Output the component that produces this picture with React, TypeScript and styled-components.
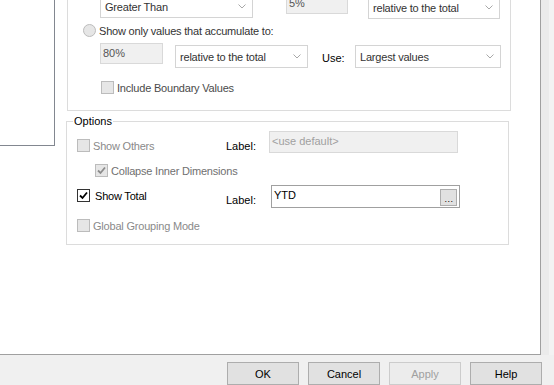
import React from 'react';
import styled, { createGlobalStyle } from 'styled-components';

const GlobalStyle = createGlobalStyle`
  *, *::before, *::after { box-sizing: border-box; }
  html, body { margin: 0; padding: 0; }
  body {
    width: 554px;
    height: 385px;
    overflow: hidden;
    background: #f0f0f0;
    font-family: "Liberation Sans", Arial, sans-serif;
    font-size: 11px;
    color: #000;
  }
`;

const Window = styled.div`
  width: 554px;
  height: 385px;
  display: flex;
  flex-direction: column;
  overflow: hidden;
  background: #f0f0f0;
`;

const Body = styled.div`
  display: flex;
  height: 355px;
  flex-shrink: 0;
`;

const Page = styled.div`
  width: 541px;
  height: 355px;
  background: #fff;
  border-right: 1px solid #a0a0a0;
  border-bottom: 1px solid #a0a0a0;
  display: flex;
  overflow: hidden;
`;

const ScrollTrack = styled.div`
  flex: 1;
  background: linear-gradient(to right, #ebebeb 0 8px, #f3f3f3 8px);
`;

const TreePane = styled.div`
  width: 55px;
  height: 146px;
  flex-shrink: 0;
  background: #fff;
  border-right: 1px solid #828790;
  border-bottom: 1px solid #828790;
`;

const Content = styled.div`
  display: flex;
  flex-direction: column;
  padding-left: 12px;
`;

const GroupBox = styled.div`
  margin-top: -20px;
  width: 444px;
  border: 1px solid #dcdcdc;
  padding: 12px 0 14px;
  display: flex;
  flex-direction: column;
`;

const OptionsBox = styled.fieldset`
  margin: 3px 0 0 -1px;
  width: 443px;
  min-inline-size: 0;
  border: 1px solid #dcdcdc;
  padding: 2px 0 11px;
  display: flex;
  flex-direction: column;
`;

const Legend = styled.legend`
  margin-left: 6px;
  padding: 0 1px;
  height: 15px;
  line-height: 15px;
  color: #000;
`;

const Row = styled.div<{ $h: number; $mt?: number }>`
  display: flex;
  align-items: flex-start;
  height: ${p => p.$h}px;
  margin-top: ${p => p.$mt ?? 0}px;
`;

const Combo = styled.div<{ $w: number; $ml?: number; $mt?: number }>`
  width: ${p => p.$w}px;
  height: 23px;
  margin-left: ${p => p.$ml ?? 0}px;
  margin-top: ${p => p.$mt ?? 0}px;
  border: 1px solid #d4d4d4;
  background: #fff;
  display: flex;
  align-items: center;
  justify-content: space-between;
  padding: 0 6px 0 4px;
  color: #333;
  letter-spacing: -0.2px;
  flex-shrink: 0;
`;

const TextBox = styled.div<{ $w: number; $h?: number; $ml?: number; $mt?: number; $disabled?: boolean }>`
  width: ${p => p.$w}px;
  height: ${p => p.$h ?? 22}px;
  margin-left: ${p => p.$ml ?? 0}px;
  margin-top: ${p => p.$mt ?? 0}px;
  border: 1px solid ${p => (p.$disabled ? '#d9d9d9' : '#a0a0a0')};
  background: ${p => (p.$disabled ? '#f0f0f0' : '#fff')};
  display: flex;
  align-items: flex-start;
  justify-content: space-between;
  padding: 3px 2px 0 2px;
  flex-shrink: 0;
`;

const BoxText = styled.span<{ $color?: string }>`
  color: ${p => p.$color ?? '#000'};
  line-height: 13px;
`;

const EllipsisButton = styled.div`
  width: 17px;
  height: 17px;
  border: 1px solid #adadad;
  background: #e1e1e1;
  display: flex;
  align-items: flex-end;
  justify-content: center;
  font-size: 9px;
  line-height: 11px;
  letter-spacing: 0.5px;
  padding-left: 1px;
`;

const FieldLabel = styled.div<{ $w: number; $mt?: number; $ml?: number }>`
  width: ${p => p.$w}px;
  margin-left: ${p => p.$ml ?? 0}px;
  margin-top: ${p => p.$mt ?? 0}px;
  line-height: 15px;
  color: #000;
  flex-shrink: 0;
`;

const Choice = styled.label<{ $w?: number; $ml?: number; $mt?: number; $gap?: number; $color?: string }>`
  display: flex;
  align-items: center;
  gap: ${p => p.$gap ?? 3}px;
  height: 15px;
  width: ${p => (p.$w ? `${p.$w}px` : 'auto')};
  margin-left: ${p => p.$ml ?? 0}px;
  margin-top: ${p => p.$mt ?? 0}px;
  color: ${p => p.$color ?? '#000'};
  letter-spacing: -0.2px;
  white-space: nowrap;
  flex-shrink: 0;
`;

const Box = styled.span<{ $disabled?: boolean }>`
  width: 13px;
  height: 13px;
  flex-shrink: 0;
  border: 1px solid ${p => (p.$disabled ? '#bcbcbc' : '#333')};
  background: ${p => (p.$disabled ? '#e6e6e6' : '#fff')};
  display: flex;
  align-items: center;
  justify-content: center;
`;

const Radio = styled.span`
  width: 13px;
  height: 13px;
  flex-shrink: 0;
  border-radius: 50%;
  border: 1px solid #bcbcbc;
  background: #e6e6e6;
`;

const ButtonBar = styled.div`
  height: 30px;
  display: flex;
  justify-content: flex-end;
  gap: 9px;
  padding: 7px 12px 0 0;
`;

const DialogButton = styled.div<{ $disabled?: boolean }>`
  width: 72px;
  height: 23px;
  border: 1px solid ${p => (p.$disabled ? '#cccccc' : '#adadad')};
  background: ${p => (p.$disabled ? '#ececec' : '#e1e1e1')};
  color: ${p => (p.$disabled ? '#a0a0a0' : '#000')};
  display: flex;
  align-items: center;
  justify-content: center;
`;

const Chevron = () => (
  <svg width="8" height="5" viewBox="0 0 8 5">
    <polyline points="0.5,0.5 4,4 7.5,0.5" fill="none" stroke="#a8a8a8" strokeWidth="1" />
  </svg>
);

const Check = ({ color }: { color: string }) => (
  <svg width="9" height="9" viewBox="0 0 9 9">
    <polyline points="1,4.5 3.5,7 8,1.5" fill="none" stroke={color} strokeWidth="1.8" />
  </svg>
);

const Select = ({ text, w, ml, mt }: { text: string; w: number; ml?: number; mt?: number }) => (
  <Combo $w={w} $ml={ml} $mt={mt}>
    <span>{text}</span>
    <Chevron />
  </Combo>
);

const App: React.FC = () => (
  <>
    <GlobalStyle />
    <Window>
      <Body>
        <Page>
          <TreePane />
          <Content>
            <GroupBox>
              <Row $h={26}>
                <Select text="Greater Than" w={153} ml={32} mt={2} />
                <TextBox $w={62} $h={21} $ml={33} $disabled>
                  <BoxText $color="#555">5%</BoxText>
                </TextBox>
                <Select text="relative to the total" w={132} ml={20} mt={3} />
              </Row>
              <Row $h={22} $mt={1}>
                <Choice $ml={15} $mt={3} $color="#333">
                  <Radio />
                  Show only values that accumulate to:
                </Choice>
              </Row>
              <Row $h={25} $mt={1}>
                <TextBox $w={63} $h={21} $ml={32} $disabled>
                  <BoxText $color="#555">80%</BoxText>
                </TextBox>
                <Select text="relative to the total" w={133} ml={12} mt={2} />
                <FieldLabel $w={33} $ml={14} $mt={8}>Use:</FieldLabel>
                <Select text="Largest values" w={146} mt={2} />
              </Row>
              <Row $h={17} $mt={11}>
                <Choice $ml={33} $mt={1} $color="#4a4a4a">
                  <Box $disabled />
                  Include Boundary Values
                </Choice>
              </Row>
            </GroupBox>

            <OptionsBox>
              <Legend>Options</Legend>
              <Row $h={22}>
                <Choice $w={149} $ml={10} $mt={7} $color="#8a8a8a">
                  <Box $disabled />
                  Show Others
                </Choice>
                <FieldLabel $w={43} $mt={8}>Label:</FieldLabel>
                <TextBox $w={189} $disabled>
                  <BoxText $color="#a0a0a0">&lt;use default&gt;</BoxText>
                </TextBox>
              </Row>
              <Row $h={15} $mt={10}>
                <Choice $ml={28} $color="#707070">
                  <Box $disabled>
                    <Check color="#8c8c8c" />
                  </Box>
                  Collapse Inner Dimensions
                </Choice>
              </Row>
              <Row $h={23} $mt={7}>
                <Choice $w={149} $ml={10} $mt={3} $gap={5}>
                  <Box>
                    <Check color="#000" />
                  </Box>
                  Show Total
                </Choice>
                <FieldLabel $w={45} $mt={8}>Label:</FieldLabel>
                <TextBox $w={189} $h={23}>
                  <BoxText>YTD</BoxText>
                  <EllipsisButton>...</EllipsisButton>
                </TextBox>
              </Row>
              <Row $h={15} $mt={10}>
                <Choice $ml={10} $color="#8a8a8a">
                  <Box $disabled />
                  Global Grouping Mode
                </Choice>
              </Row>
            </OptionsBox>
          </Content>
        </Page>
        <ScrollTrack />
      </Body>
      <ButtonBar>
        <DialogButton>OK</DialogButton>
        <DialogButton>Cancel</DialogButton>
        <DialogButton $disabled>Apply</DialogButton>
        <DialogButton>Help</DialogButton>
      </ButtonBar>
    </Window>
  </>
);

export default App;
